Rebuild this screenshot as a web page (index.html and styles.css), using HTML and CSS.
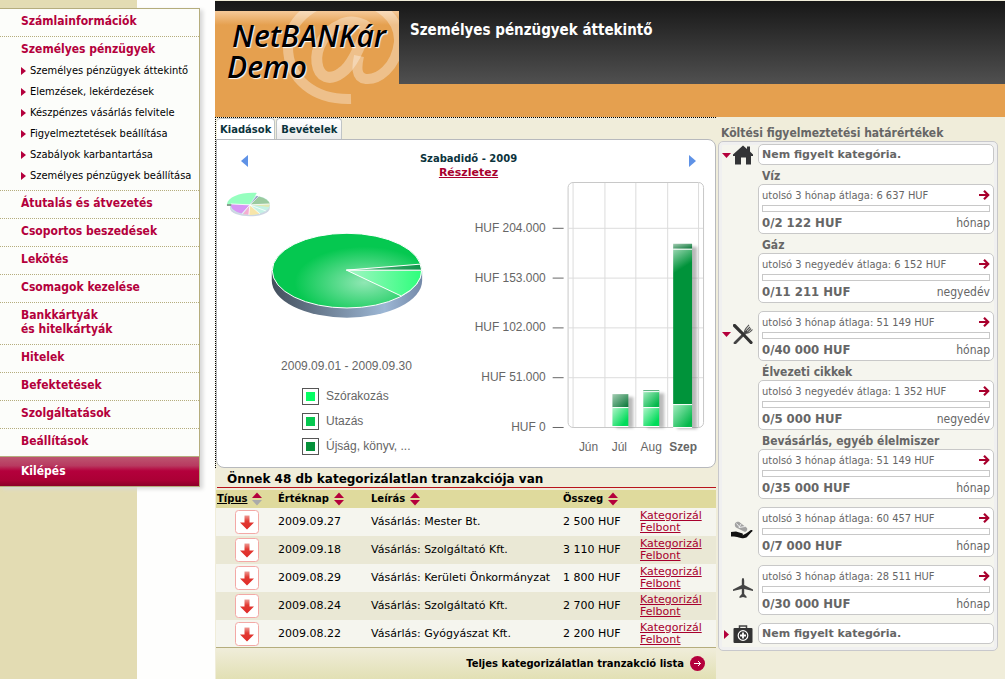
FILE: index.html
```html
<!DOCTYPE html>
<html lang="hu">
<head>
<meta charset="utf-8">
<title>Személyes pénzügyek áttekintő</title>
<link rel="stylesheet" href="styles.css">
</head>
<body>
<svg class="defs" width="0" height="0" aria-hidden="true">
  <defs>
    <symbol id="arrow" viewBox="0 0 12 12"><path d="M1 6h9M6 1.800l4.200 4.200L6 10.200" fill="none" stroke="#a8002d" stroke-width="2.200"/></symbol>
    <symbol id="sort" viewBox="0 0 10 14"><path d="M0 6L5 0.500L10 6z" fill="#b4003c"/><path d="M0 8L5 13.500L10 8z"/></symbol>
    <symbol id="debit" viewBox="0 0 24 24">
      <rect x="0.500" y="0.500" width="23" height="23" rx="3" fill="#fff" stroke="#f3a9a6"/>
      <path d="M9.500 5.500h5v7h4.500l-7 7-7-7h4.500z" fill="url(#red)"/>
    </symbol>
    <linearGradient id="red" x1="0" y1="0" x2="0" y2="1"><stop offset="0" stop-color="#ee9b95"/><stop offset=".4" stop-color="#e23a33"/><stop offset="1" stop-color="#df2a28"/></linearGradient>
  </defs>
</svg>
<div class="page">
  <nav class="sidebar">
    <ul class="menu">
      <li><a href="#">Számlainformációk</a></li>
      <li><a href="#">Személyes pénzügyek</a>
        <ul class="submenu">
          <li><a href="#">Személyes pénzügyek áttekintő</a></li>
          <li><a href="#">Elemzések, lekérdezések</a></li>
          <li><a href="#">Készpénzes vásárlás felvitele</a></li>
          <li><a href="#">Figyelmeztetések beállítása</a></li>
          <li><a href="#">Szabályok karbantartása</a></li>
          <li><a href="#">Személyes pénzügyek beállítása</a></li>
        </ul>
      </li>
      <li><a href="#">Átutalás és átvezetés</a></li>
      <li><a href="#">Csoportos beszedések</a></li>
      <li><a href="#">Lekötés</a></li>
      <li><a href="#">Csomagok kezelése</a></li>
      <li><a href="#">Bankkártyák<br>és hitelkártyák</a></li>
      <li><a href="#">Hitelek</a></li>
      <li><a href="#">Befektetések</a></li>
      <li><a href="#">Szolgáltatások</a></li>
      <li><a href="#">Beállítások</a></li>
    </ul>
    <a class="logout" href="#">Kilépés</a>
  </nav>

  <div class="main">
    <header class="header">
      <div class="logo">
        <svg class="logo-mark" viewBox="215 11 184 106" aria-hidden="true">
          <g fill="none" stroke="#fff" stroke-opacity=".34">
            <path d="M351 99C314 100 288 79 288 47C289 18 317 -2 348 -1C378 0 400 18 399 42C396 68 378 80 366 79C355 78 357 65 359 56" stroke-width="10"/>
            <path d="M367 27C360 22 349 20 340 25C325 31 315 48 317 63C319 78 330 81 341 73C352 66 360 47 367 27" stroke-width="11"/>
          </g>
        </svg>
        <div class="logo-text"><span>NetBANKár</span><br>Demo</div>
      </div>
      <h1>Személyes pénzügyek áttekintő</h1>
    </header>

    <div class="content">
      <main class="overview">
        <div class="chart-frame">
        <div class="tabs">
          <button class="tab active" type="button">Kiadások</button>
          <button class="tab" type="button">Bevételek</button>
        </div>
        <section class="chart-panel">
          <div class="chart-head">
            <button class="step" type="button" aria-label="Előző"><svg width="7" height="12" viewBox="0 0 7 12"><path d="M7 0v12L0 6z"/></svg></button>
            <div class="chart-title">Szabadidő - 2009<br><a href="#">Részletez</a></div>
            <button class="step" type="button" aria-label="Következő"><svg width="7" height="12" viewBox="0 0 7 12"><path d="M0 0v12L7 6z"/></svg></button>
          </div>
          <div class="charts">
            <div class="pie">
              <svg viewBox="217 181 250 177" role="img" aria-label="Kiadások megoszlása">
                <defs>
                  <radialGradient id="g1" gradientUnits="userSpaceOnUse" cx="0" cy="0" r="1" gradientTransform="translate(364 282) scale(70 36)"><stop offset="0" stop-color="#90e7b4"/><stop offset="1" stop-color="#05c850"/></radialGradient>
                  <linearGradient id="g2"><stop offset="0" stop-color="#a5f5c5"/><stop offset="1" stop-color="#2dff7b"/></linearGradient>
                  <linearGradient id="g3"><stop offset="0" stop-color="#5cc286"/><stop offset="1" stop-color="#10934a"/></linearGradient>
                  <linearGradient id="g4"><stop offset="0" stop-color="#434f5c"/><stop offset=".75" stop-color="#9db7d5"/><stop offset="1" stop-color="#7489a8"/></linearGradient>
                </defs>
                <g opacity=".8">
                  <path d="M229 204v3a20 8.500 0 0 0 40 0v-3z" fill="#c3cddd"/>
                  <ellipse cx="249" cy="204" rx="20" ry="10" fill="#b6f0df"/>
                  <path d="M249 204L258 195.500A20 10 0 0 1 269 203z" fill="#83bd88"/>
                  <path d="M249 204L256 195L258 195.500z" fill="#6b67a9"/>
                  <path d="M249 204L269 203A20 10 0 0 1 268 206z" fill="#d9e4a0"/>
                  <path d="M249 204L259 213A20 10 0 0 1 248 214z" fill="#f6df96"/>
                  <path d="M249 204L248 214L242 213.500z" fill="#f39ac8"/>
                  <path d="M249 204L241 213A20 10 0 0 1 230 203z" fill="#cf7cf2"/>
                  <path d="M226 203v2h4l1-2z" fill="#6b8673"/>
                  <path d="M249 203H226C227 196 240 191 256 192z" fill="#7dffb0"/>
                  <path d="M249 204L230 203M249 204L241 213M249 204L248 214M249 204L259 213M249 204L265 210M249 204L269 203M249 204L258 195" stroke="#fff" stroke-width=".8"/>
                </g>
                <path d="M271 270v10a75 37 0 0 0 151 0v-10z" fill="url(#g4)"/>
                <ellipse cx="346.500" cy="270" rx="75" ry="37.500" fill="url(#g1)" stroke="#fff"/>
                <path d="M346 269.500L401 295.500A75 37.500 0 0 0 421.500 269.500z" fill="url(#g2)" stroke="#fff"/>
                <path d="M346 269.500L420 263.500L421.500 269.500z" fill="url(#g3)" stroke="#fff"/>
              </svg>
              <p class="period">2009.09.01 - 2009.09.30</p>
              <ul class="legend">
                <li><i class="swatch light"></i>Szórakozás</li>
                <li><i class="swatch mid"></i>Utazás</li>
                <li><i class="swatch dark"></i>Újság, könyv, ...</li>
              </ul>
            </div>
            <svg class="bars" viewBox="467 181 241 276" role="img" aria-label="Havi kiadások">
              <defs>
                <linearGradient id="b1" x1="0" y1="0" x2="1" y2="1"><stop offset="0" stop-color="#b3f5cb"/><stop offset=".8" stop-color="#00dc5a"/></linearGradient>
                <linearGradient id="b2" x1="0" y1="0" x2="1" y2="1"><stop offset="0" stop-color="#a5ecc0"/><stop offset=".85" stop-color="#04b84b"/></linearGradient>
                <linearGradient id="b3" x1="0" y1="0" x2="1" y2="1"><stop offset="0" stop-color="#a4cdb3"/><stop offset="1" stop-color="#067536"/></linearGradient>
                <linearGradient id="b4" gradientUnits="userSpaceOnUse" x1="672" y1="248" x2="684" y2="267"><stop offset="0" stop-color="#a4dbb9"/><stop offset="1" stop-color="#00933a"/></linearGradient>
                <filter id="soft" filterUnits="userSpaceOnUse" x="600" y="230" width="108" height="210"><feGaussianBlur stdDeviation="1.500"/></filter>
              </defs>
              <g stroke="#dcdcdc" fill="none">
                <path d="M573.500 182v245M605.500 182v245M636.500 182v245M668.500 182v245M699.500 182v245M569 227.500h135M569 277.500h135M569 327.500h135M569 377.500h135"/>
                <rect x="568.500" y="181.500" width="136" height="246" rx="5" stroke="#c8c8c8"/>
              </g>
              <path d="M553 227.500h11M553 277.500h11M553 327.500h11M553 377.500h11M553 427.500h11" stroke="#666"/>
              <g fill="#777" opacity=".5" filter="url(#soft)"><path d="M617 397h17v31h-17zM648 393h17v35h-17zM678 246h20v183h-20z"/></g>
              <path d="M613 407h16v19h-16z" fill="url(#b1)"/><path d="M613 394h16v13h-16z" fill="url(#b3)"/>
              <path d="M644 407h16v19h-16z" fill="url(#b1)"/><path d="M644 391h16v16h-16z" fill="url(#b2)"/><path d="M644 390h16v1h-16z" fill="#45a66d"/>
              <path d="M674 404h19v23h-19z" fill="url(#b2)"/><path d="M674 248h19v156h-19z" fill="url(#b4)"/><path d="M674 243h19v5h-19z" fill="url(#b3)"/>
              <path d="M613 407.500h16M613 426.500h16M644 391.500h16M644 407.500h16M644 426.500h16M674 248.500h19M674 404.500h19M674 427.500h19" stroke="#fff"/>
              <g class="chart-label" text-anchor="end">
                <text x="546" y="231">HUF 204.000</text><text x="546" y="281">HUF 153.000</text><text x="546" y="331">HUF 102.000</text><text x="546" y="381">HUF 51.000</text><text x="546" y="431">HUF 0</text>
              </g>
              <g class="chart-label" text-anchor="middle">
                <text x="589" y="451">Jún</text><text x="620" y="451">Júl</text><text x="652" y="451">Aug</text><text x="684" y="451" font-weight="bold">Szep</text>
              </g>
            </svg>
          </div>
        </section>
        </div>

        <div class="uncategorized">
        <h2 class="table-title">Önnek 48 db kategorizálatlan tranzakciója van</h2>
        <table class="transactions">
          <colgroup><col class="c-type"><col class="c-date"><col class="c-desc"><col class="c-sum"><col class="c-act"></colgroup>
          <thead><tr>
            <th><button type="button" class="sorted"><u>Típus</u><svg><use href="#sort"/></svg></button></th>
            <th><button type="button">Értéknap<svg><use href="#sort"/></svg></button></th>
            <th><button type="button">Leírás<svg><use href="#sort"/></svg></button></th>
            <th><button type="button">Összeg<svg><use href="#sort"/></svg></button></th>
            <th></th>
          </tr></thead>
          <tbody>
            <tr><td><svg><use href="#debit"/></svg></td><td>2009.09.27</td><td>Vásárlás: Mester Bt.</td><td>2 500 HUF</td><td><a href="#">Kategorizál</a><a href="#">Felbont</a></td></tr>
            <tr><td><svg><use href="#debit"/></svg></td><td>2009.09.18</td><td>Vásárlás: Szolgáltató Kft.</td><td>3 110 HUF</td><td><a href="#">Kategorizál</a><a href="#">Felbont</a></td></tr>
            <tr><td><svg><use href="#debit"/></svg></td><td>2009.08.29</td><td>Vásárlás: Kerületi Önkormányzat</td><td>1 800 HUF</td><td><a href="#">Kategorizál</a><a href="#">Felbont</a></td></tr>
            <tr><td><svg><use href="#debit"/></svg></td><td>2009.08.24</td><td>Vásárlás: Szolgáltató Kft.</td><td>2 700 HUF</td><td><a href="#">Kategorizál</a><a href="#">Felbont</a></td></tr>
            <tr><td><svg><use href="#debit"/></svg></td><td>2009.08.22</td><td>Vásárlás: Gyógyászat Kft.</td><td>2 200 HUF</td><td><a href="#">Kategorizál</a><a href="#">Felbont</a></td></tr>
          </tbody>
        </table>
        <div class="table-foot"><a href="#">Teljes kategorizálatlan tranzakció lista
          <svg width="15" height="15" viewBox="0 0 15 15" aria-hidden="true"><circle cx="7.500" cy="7.500" r="7.500" fill="#b4003c"/><path d="M4 7.500h6.500M8 5l2.500 2.500L8 10" fill="none" stroke="#fff"/></svg></a></div>
        </div>
      </main>

      <aside class="limits">
        <h2>Költési figyelmeztetési határértékek</h2>
        <div class="limit-panel">
          <section class="group">
            <div class="cat short">
              <svg class="toggle" viewBox="0 0 9 9"><path d="M0 2h9L4.500 7z"/></svg>
              <svg class="icon" viewBox="0 0 20 20"><path d="M10 0.500L14 4V1.500h3v5L20 9.500v1.500h-2V19.500h-5V12.500H8v7H2V11H0V9.500z" fill="#333436"/></svg>
            </div>
            <div class="boxes">
              <div class="box plain">Nem figyelt kategória.</div>
              <h3>Víz</h3>
              <div class="box"><div class="avg">utolsó 3 hónap átlaga: 6 637 HUF<a href="#" aria-label="Víz"><svg><use href="#arrow"/></svg></a></div><div class="bar"></div><div class="sum"><b>0/2 122 HUF</b><span>hónap</span></div></div>
              <h3>Gáz</h3>
              <div class="box"><div class="avg">utolsó 3 negyedév átlaga: 6 152 HUF<a href="#" aria-label="Gáz"><svg><use href="#arrow"/></svg></a></div><div class="bar"></div><div class="sum"><b>0/11 211 HUF</b><span>negyedév</span></div></div>
            </div>
          </section>
          <section class="group">
            <div class="cat">
              <svg class="toggle" viewBox="0 0 9 9"><path d="M0 2h9L4.500 7z"/></svg>
              <svg class="icon" viewBox="0 0 20 20"><path d="M2 19L13 8" stroke="#444" stroke-width="2.800" stroke-linecap="round"/><path d="M11.500 9.500C10.500 6 13 4 16 1M13 7l4-4M14 8.500l4-4M12 9c3 1 5-.500 7.500-3.500" stroke="#555" stroke-width="1.100" fill="none"/><path d="M1.500 1.500L8 8L18 18.500" stroke="#333" stroke-width="3.200" stroke-linecap="round"/></svg>
            </div>
            <div class="boxes">
              <div class="box"><div class="avg">utolsó 3 hónap átlaga: 51 149 HUF<a href="#" aria-label="Élelmiszer"><svg><use href="#arrow"/></svg></a></div><div class="bar"></div><div class="sum"><b>0/40 000 HUF</b><span>hónap</span></div></div>
              <h3>Élvezeti cikkek</h3>
              <div class="box"><div class="avg">utolsó 3 negyedév átlaga: 1 352 HUF<a href="#" aria-label="Élvezeti cikkek"><svg><use href="#arrow"/></svg></a></div><div class="bar"></div><div class="sum"><b>0/5 000 HUF</b><span>negyedév</span></div></div>
              <h3>Bevásárlás, egyéb élelmiszer</h3>
              <div class="box"><div class="avg">utolsó 3 hónap átlaga: 51 149 HUF<a href="#" aria-label="Bevásárlás"><svg><use href="#arrow"/></svg></a></div><div class="bar"></div><div class="sum"><b>0/35 000 HUF</b><span>hónap</span></div></div>
            </div>
          </section>
          <section class="group">
            <div class="cat">
              <svg class="icon wide" viewBox="0 0 22 20"><path d="M4 3.500C5 1.500 8 1 9.500 3L16 8c1 2-1 4.500-3 3.500L5 7.500C4 6.500 3.500 5 4 3.500z" fill="#a2a2a2"/><path d="M5.500 3.500l3 3.500M10 4l-2 3.500M8 7.500l6-1" stroke="#eee"/><path d="M0 12l5-.500 5 1.500c3 .500 2 2 1 2.500l4-2c2-1.500 4-3 5-3.500 2-.500 2 1 .500 2L16 17c-1 1-3 1.500-6 1-3-.500-5-1.500-7-1.500H0z" fill="#111"/></svg>
            </div>
            <div class="boxes"><div class="box"><div class="avg">utolsó 3 hónap átlaga: 60 457 HUF<a href="#" aria-label="Egészség"><svg><use href="#arrow"/></svg></a></div><div class="bar"></div><div class="sum"><b>0/7 000 HUF</b><span>hónap</span></div></div></div>
          </section>
          <section class="group">
            <div class="cat">
              <svg class="icon" viewBox="0 0 20 20"><path d="M10 0C9 0 8.800 1.500 8.800 3V7L0 11.500V13l8.800-2V16L6.500 18.500V20L10 19l3.500 1V18.500L11.200 16V11L20 13V11.500L11.200 7V3C11.200 1.500 11 0 10 0z" fill="#444"/></svg>
            </div>
            <div class="boxes"><div class="box"><div class="avg">utolsó 3 hónap átlaga: 28 511 HUF<a href="#" aria-label="Utazás"><svg><use href="#arrow"/></svg></a></div><div class="bar"></div><div class="sum"><b>0/30 000 HUF</b><span>hónap</span></div></div></div>
          </section>
          <section class="group">
            <div class="cat short">
              <svg class="toggle" viewBox="0 0 9 9"><path d="M2 0v9L7 4.500z"/></svg>
              <svg class="icon" viewBox="0 0 20 20"><path d="M6.500 4V2h7v2" fill="none" stroke="#444" stroke-width="1.500"/><rect x="0.500" y="4" width="19" height="15" rx="1" fill="#333"/><circle cx="10" cy="11.500" r="4.800" fill="#333" stroke="#fff" stroke-width="1.200"/><path d="M10 8.500v6M7 11.500h6" stroke="#fff" stroke-width="1.800"/></svg>
            </div>
            <div class="boxes"><div class="box plain">Nem figyelt kategória.</div></div>
          </section>
        </div>
      </aside>
    </div>
  </div>
</div>
</body>
</html>
```
FILE: styles.css
```css
* { box-sizing: border-box; }
body {
  margin: 0;
  background: #f0edda;
  color: #000;
  font: 11px/14px "DejaVu Sans", sans-serif;
}
h1, h2, h3, p, ul { margin: 0; padding: 0; }
ul { list-style: none; }
button { margin: 0; padding: 0; border: 0; background: none; font: inherit; color: inherit; }
a { color: #a8002d; }
.defs { position: absolute; }
.page {
  display: grid;
  grid-template-columns: 215px minmax(0, 1fr);
  min-height: 100vh;
  background: linear-gradient(90deg, #e3dcb3 137px, #fefefd 137px 215px, #f0edda 215px);
}

/* sidebar */
.sidebar {
  align-self: start;
  margin: 8px 15px 0 0;
  border: 1px solid #b5ad7d;
  border-width: 1px 1px 1px 0;
  background: #fcfdfa;
  box-shadow: 3px 2px 4px #d8d8d8;
  font: bold 12px/14px "DejaVu Sans Condensed", "DejaVu Sans", sans-serif;
}
.sidebar a { display: block; color: #b4003c; text-decoration: none; }
.menu > li { padding: 5px 0 8px 21px; border-bottom: 1px dotted #b5ad7d; }
.menu > li:last-child { border-bottom: 0; }
.submenu { margin: 4px 0 -4px; font-size: 11px; font-weight: normal; line-height: 21px; }
.submenu a { display: flex; align-items: center; gap: 4px; color: #000; white-space: nowrap; }
.submenu a::before { content: ""; border: solid transparent; border-width: 4px 0 4px 5px; border-left-color: #b4003c; }
.sidebar .logout {
  padding: 7px 0 8px 21px;
  border-top: 1px solid #b5ad7d;
  background: linear-gradient(#bd5570, #b83a60 30%, #b4003c 48%, #ab0035 80%, #8c0029);
  color: #fff;
}

/* header */
.main { min-width: 0; }
.header {
  display: flex;
  align-items: flex-start;
  height: 116px;
  margin-top: 1px;
  background: linear-gradient(#171717, #505050 83px, #e5a04f 83px);
}
.logo {
  position: relative;
  width: 184px;
  height: 106px;
  margin-top: 10px;
  background: linear-gradient(#f5c999, #e5a04f 14px);
  overflow: hidden;
}
.logo-mark { position: absolute; inset: 0; }
.logo-text {
  position: relative;
  padding: 9px 0 0 12px;
  font: italic 600 30px/31px "Open Sans", sans-serif;
  text-shadow: 1px 1px 1px #fff;
}
.logo-text span { padding-left: 5px; }
.header h1 {
  margin: 20px 0 0 11px;
  color: #fff;
  font: bold 15px/18px "DejaVu Sans Condensed", "DejaVu Sans", sans-serif;
}

/* overview */
.content {
  display: grid;
  grid-template-columns: minmax(0, 501fr) minmax(0, 280fr);
  gap: 2px;
  padding-right: 7px;
}
.chart-frame { border: 1px dotted #000; border-width: 1px 0 0 1px; }
.tabs { display: flex; gap: 1px; padding-left: 1px; }
.tab {
  height: 21px;
  padding: 0 4px;
  border: 1px solid #bfc4c6;
  border-bottom: 0;
  border-radius: 4px 4px 0 0;
  background: linear-gradient(#fff, #ececec);
  color: #0b333c;
  font: bold 10px/19px "DejaVu Sans", sans-serif;
}
.tab.active { padding: 0 3px; border-left: 0; background: #fff; }
.chart-panel {
  padding: 12px 8px 10px 1px;
  border: 1px solid #b7b9bd;
  border-radius: 0 8px 8px 8px;
  background: #fff;
}
.chart-head { display: flex; justify-content: space-between; padding: 0 11px 0 23px; margin-bottom: 2px; }
.chart-title { color: #0b333c; font-size: 10px; font-weight: bold; text-align: center; }
.chart-title a { font-size: 11px; }
.step { align-self: flex-start; height: 16px; padding-top: 2px; }
.step svg { display: block; fill: #5f92e6; }
.charts { display: grid; grid-template-columns: 250fr 241fr; align-items: start; }
.charts svg { display: block; width: 100%; }
.period, .legend, .chart-label { font: 12px/17px "Liberation Sans", sans-serif; color: #666; fill: #666; }
.period { text-align: center; padding-left: 8px; }
.legend { display: grid; gap: 8px; margin: 13px 0 0 84px; }
.legend li { display: flex; gap: 7px; }
.swatch { width: 17px; height: 17px; border: 1px solid #555; background: #fff; padding: 3px; background-clip: content-box; }
.light { background-color: #05ff64; }
.mid { background-color: #05c850; }
.dark { background-color: #05913a; }

/* transactions */
.uncategorized { padding-left: 1px; }
.table-title { padding: 5px 0 1px 10px; margin: 0 0 2px 1px; border-bottom: 1px solid #b8141c; font-size: 12px; line-height: 13px; white-space: nowrap; }
.transactions { width: 100%; border-collapse: collapse; table-layout: fixed; border-bottom: 1px solid #b5ad7d; font-size: 11px; line-height: 12px; }
.c-type { width: 12.400%; }
.c-date { width: 18.600%; }
.c-desc { width: 38.400%; }
.c-sum { width: 15.400%; }
.transactions th { height: 18px; padding: 0; background: #dfda9d; text-align: left; font-size: 10px; }
.transactions th:first-child { padding-left: 1px; }
.transactions th button { display: flex; align-items: center; gap: 5px; }
.transactions th svg { width: 10px; height: 14px; fill: #b4003c; }
.transactions .sorted svg { fill: #aaa; }
.transactions td { height: 28px; padding: 0; white-space: nowrap; }
.transactions tbody tr { background: #f5f5ee; }
.transactions tbody tr:nth-child(even) { background: #eae8d5; }
.transactions td:first-child { text-align: center; }
.transactions td svg { display: block; width: 24px; height: 24px; margin: auto; }
.transactions td a { display: block; }
.table-foot { display: flex; justify-content: flex-end; padding: 8px 11px 8px 0; background: linear-gradient(#f0edda, #e2e0b4); font-size: 10px; font-weight: bold; }
.table-foot a { display: flex; align-items: center; gap: 6px; color: #000; text-decoration: none; }

/* limits */
.limits { color: #666; font-family: "DejaVu Sans Condensed", "DejaVu Sans", sans-serif; }
.limits h2 { padding: 8px 0 0 3px; font-size: 12px; line-height: 16px; white-space: nowrap; }
.limits h3 { height: 19px; padding: 4px 0 0 4px; font-size: 12px; line-height: 15px; white-space: nowrap; }
.limit-panel {
  display: grid;
  gap: 8px;
  padding: 2px 1px 5px;
  border: 1px solid #c8c8cc;
  border-radius: 5px;
  background: #f5f5ee;
  box-shadow: inset 0 0 0 3px #f0f0f0;
}
.group { display: grid; grid-template-columns: 38px minmax(0, 1fr); padding-right: 2px; }
.cat { display: flex; align-items: center; justify-content: flex-end; gap: 2px; height: 46px; padding-right: 5px; }
.cat.short { height: 22px; }
.toggle { width: 9px; height: 9px; fill: #b4003c; }
.icon { width: 20px; height: 20px; }
.icon.wide { width: 22px; }
.box { height: 50px; padding: 4px 3px 1px; border: 1px solid #c8c8c8; border-radius: 5px; background: #fff; }
.box.plain { height: 21px; padding: 3px 3px 0; font: bold 11px/14px "DejaVu Sans", sans-serif; }
.avg, .sum { display: flex; justify-content: space-between; white-space: nowrap; }
.avg { font-size: 11px; line-height: 14px; }
.avg svg { display: block; width: 12px; height: 12px; }
.bar { height: 7px; margin: 2px 0 3px; border: 1px solid #c8c8c8; }
.sum { font-size: 12px; line-height: 16px; }
.sum b { font-size: 13px; }
```
